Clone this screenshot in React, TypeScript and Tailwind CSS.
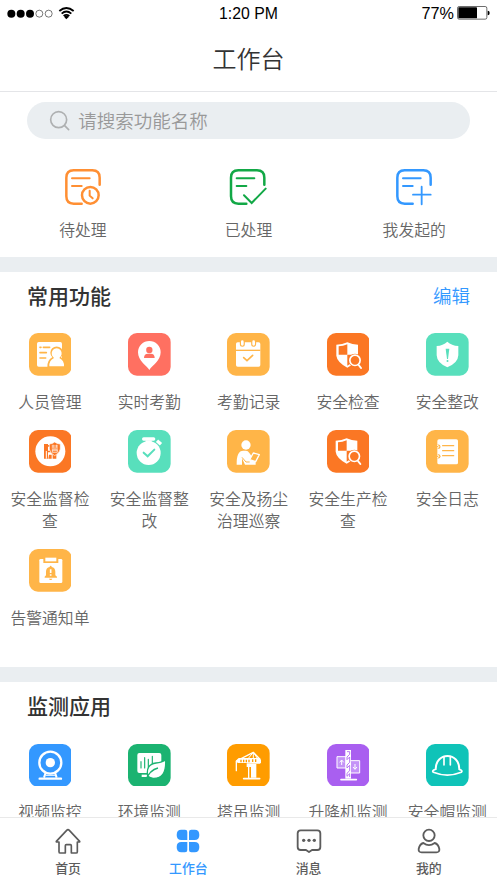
import React from "react";

type Item = { label: string; bg: string; icon: React.ReactNode };

const W = "#fff";
const AMBER = "#ffb548";
const ORANGE = "#fb7724";
const MINT = "#58dfbc";

function ShieldSearch() {
  return (
    <>
      <path d="M61 28 Q76 35 93 35 V68 Q92 87 61 104 Q30 87 28 68 V35 Q46 35 61 28Z" fill={W} />
      <path d="M61 34 V65 H35 V40 Q48 40 61 34Z" fill={ORANGE} />
      <path d="M61 65 H89 Q86 84 61 98Z" fill={ORANGE} />
      <circle cx="84" cy="82" r="20" fill={ORANGE} />
      <circle cx="84" cy="82" r="15.5" fill={ORANGE} stroke={W} strokeWidth="5" />
      <path d="M95 96 L102 105" stroke={W} strokeWidth="6" strokeLinecap="round" />
    </>
  );
}

const people = (
  <>
    <rect x="24" y="27" width="75" height="74" rx="5" fill={W} />
    <path d="M33 43 H36 M43 43 H62 M33 59 H52 M33 75 H50" stroke={AMBER} strokeWidth="5" strokeLinecap="round" />
    <path d="M55 105 Q53 82 70 73 A19 19 0 1 1 96 73 Q112 82 110 105Z" fill={AMBER} />
    <path d="M61 100 Q60 82 75 75 A15 16 0 1 1 91 75 Q106 82 105 100Z" fill={W} />
  </>
);

const pin = (
  <>
    <path d="M64 111 C56 98 30 84 30 58 A34 34 0 0 1 98 58 C98 84 72 98 64 111Z" fill={W} />
    <circle cx="64" cy="51" r="9.5" fill="#ff7061" />
    <path d="M48 75 Q48 62 60 62 H68 Q80 62 80 75Z" fill="#ff7061" />
  </>
);

const calendar = (
  <>
    <rect x="27" y="28" width="73" height="73" rx="5" fill={W} />
    <path d="M27 52 H100" stroke={AMBER} strokeWidth="4" />
    <path d="M46 27 V34 M80 27 V34" stroke={AMBER} strokeWidth="15" strokeLinecap="round" />
    <path d="M46 26 V34 M80 26 V34" stroke={W} strokeWidth="8" strokeLinecap="round" />
    <path d="M50 74 L60 83 L77 67" fill="none" stroke={AMBER} strokeWidth="5" strokeLinecap="round" />
  </>
);

const shieldAlert = (
  <>
    <path d="M64 26 Q77 38 97 39 V67 Q96 90 64 103 Q33 90 32 67 V39 Q51 38 64 26Z" fill={W} />
    <path d="M59 47 H70 L66 78 H63Z" fill={MINT} />
    <circle cx="64.5" cy="84" r="3" fill={MINT} />
  </>
);

const supervise = (
  <>
    <circle cx="64" cy="64" r="45" fill={W} />
    <path d="M45 42 H57 V86 H45Z M60 74 H68 V86 H58Z M71 73 H82 V86 H71Z" fill={ORANGE} />
    <path d="M52 63 V86" stroke={W} strokeWidth="3" />
    <path d="M57 45 H66 V50 H57Z M57 62 H66 V67 H57Z" fill={ORANGE} />
    <path d="M77 36 Q84 42 94 42 V57 Q92 70 77 77 Q63 70 61 57 V42 Q70 42 77 36Z" fill={ORANGE} stroke={W} strokeWidth="2" />
    <path d="M68 48 H87 M72 44 V53 M83 44 V53 M68 54 H87 M70 58 H85 V67 H70Z M70 62 H85" fill="none" stroke={W} strokeWidth="2" />
  </>
);

const stopwatch = (
  <>
    <circle cx="62" cy="69" r="36" fill={W} />
    <path d="M47 27 H77" stroke={W} strokeWidth="10" strokeLinecap="round" />
    <path d="M53 31 H71 V42 H53Z" fill={W} />
    <path d="M87 32 L99 43" stroke={W} strokeWidth="10" />
    <path d="M47 68 L59 79 L79 59" fill="none" stroke={MINT} strokeWidth="6" strokeLinecap="round" />
  </>
);

const patrol = (
  <>
    <circle cx="57" cy="45" r="14" fill={W} />
    <path d="M29 104 Q28 62 49 62 H57 Q63 62 67 69 L80 86 H86 V104 H54 L45 85 V104Z" fill={W} />
    <path d="M45 82 L57 96 H68" fill="none" stroke={AMBER} strokeWidth="3" />
    <path d="M79 69 L97 74 L86 95 L68 89Z" fill={AMBER} stroke={W} strokeWidth="4" strokeLinejoin="round" />
  </>
);

const notebook = (
  <>
    <rect x="34" y="28" width="62" height="75" rx="5" fill={W} />
    <path d="M50 47 H83 M50 62 H83 M50 77 H83" stroke={AMBER} strokeWidth="4" strokeLinecap="round" />
    {[50, 79].map((y) => (
      <g key={y}>
        <circle cx="37" cy={y} r="6.5" fill={AMBER} />
        <path d={`M33 ${y - 3} A3.5 3.5 0 1 1 33 ${y + 3}`} fill="none" stroke={W} strokeWidth="3" />
      </g>
    ))}
  </>
);

const clipboard = (
  <>
    <rect x="31" y="30" width="69" height="72" rx="4" fill={W} />
    <path d="M43 25 H88 V42 H43Z" fill={AMBER} />
    <path d="M49 26 H82 V37 H49Z" fill={W} />
    <path d="M47 86 V83 L51 79 V68 Q51 56 62 54 Q62 50 65 50 Q68 50 68 54 Q79 56 79 68 V79 L84 83 V86Z" fill={AMBER} />
    <path d="M60 89 H70 Q69 93 65 93 Q61 93 60 89Z" fill={AMBER} />
    <path d="M65 61 V72 M65 76 V80" stroke={W} strokeWidth="5" />
  </>
);

const webcam = (
  <>
    <circle cx="64" cy="56" r="33" fill="none" stroke={W} strokeWidth="7" />
    <circle cx="64" cy="56" r="14" fill={W} />
    <path d="M50 86 L45 101 M78 86 L83 101" stroke={W} strokeWidth="6" />
    <path d="M50 94 H78" stroke={W} strokeWidth="3" />
    <path d="M32 104 H96" stroke={W} strokeWidth="7" strokeLinecap="round" />
  </>
);

const GREEN = "#1bb371";
const environment = (
  <>
    <rect x="28" y="27" width="72" height="60" rx="6" fill={W} />
    <path d="M39 53 V72 M50 41 V72 M61 46 V70 M73 37 V60" stroke={GREEN} strokeWidth="3.5" strokeLinecap="round" />
    <path d="M41 92 H58 V99 H41Z" fill={W} />
    <path d="M59 96 Q53 61 84 57 Q103 55 113 48 Q116 105 75 103 Q63 101 59 96Z" fill={W} stroke={GREEN} strokeWidth="4" />
    <path d="M55 105 Q65 79 90 72" fill="none" stroke={GREEN} strokeWidth="4" />
  </>
);

const crane = (
  <>
    <path d="M28 51 L79 25 L99 46" fill="none" stroke={W} strokeWidth="4" strokeLinejoin="round" />
    <path d="M79 25 L65 42 M79 25 V43 M79 25 L91 43" stroke={W} strokeWidth="3" />
    <path d="M25 52 L35 42 H98 L102 47 V57 H33Z" fill={W} />
    <path d="M42 47 V55 M50 47 V55 M58 47 V55 M66 47 V55 M77 46 V54 M86 46 V54" stroke="#ff9c00" strokeWidth="4" />
    <path d="M28 54 V80" stroke={W} strokeWidth="4" strokeLinecap="round" />
    <path d="M59 58 H100 V60 H88 V101 H72 V69 H59Z" fill={W} />
    <path d="M65 67 V104" stroke={W} strokeWidth="4" />
    <path d="M50 104 H98" stroke={W} strokeWidth="5" strokeLinecap="round" />
  </>
);

const elevator = (
  <>
    <path d="M30 38 H57 V72 H30Z" fill="#c492f7" stroke={W} strokeWidth="3" />
    <path d="M70 50 H98 V87 H70Z" fill="#c492f7" stroke={W} strokeWidth="3" />
    <path d="M44 63 V49 M38 55 L44 48 L50 55 M84 60 V75 M78 69 L84 76 L90 69" fill="none" stroke={W} strokeWidth="3" />
    <path d="M55 18 H72 V104 H55Z" fill={W} />
    <path d="M60 23 H68 V31 L60 39 V47 L68 39 V55 L60 63 V72 L68 64 V80 L60 88 V97 L68 89 V99" fill="none" stroke="#a95ff0" strokeWidth="2.5" />
    <path d="M42 107 H88" stroke={W} strokeWidth="5" strokeLinecap="round" />
  </>
);

const helmet = (
  <>
    <path d="M29 78 C27 22 102 22 100 78" fill="none" stroke={W} strokeWidth="6" />
    <path d="M54 38 V63 M73 38 V63" stroke={W} strokeWidth="5" strokeLinecap="round" />
    <path d="M28 77 Q16 79 22 85 Q64 102 106 85 Q112 79 100 77" fill="none" stroke={W} strokeWidth="5" strokeLinejoin="round" />
  </>
);

const common: Item[] = [
  { label: "人员管理", bg: AMBER, icon: people },
  { label: "实时考勤", bg: "#ff7061", icon: pin },
  { label: "考勤记录", bg: AMBER, icon: calendar },
  { label: "安全检查", bg: ORANGE, icon: <ShieldSearch /> },
  { label: "安全整改", bg: MINT, icon: shieldAlert },
  { label: "安全监督检查", bg: ORANGE, icon: supervise },
  { label: "安全监督整改", bg: MINT, icon: stopwatch },
  { label: "安全及扬尘治理巡察", bg: AMBER, icon: patrol },
  { label: "安全生产检查", bg: ORANGE, icon: <g transform="translate(-2 -3)"><ShieldSearch /></g> },
  { label: "安全日志", bg: AMBER, icon: notebook },
  { label: "告警通知单", bg: AMBER, icon: clipboard },
];

const monitor: Item[] = [
  { label: "视频监控", bg: "#3398ff", icon: webcam },
  { label: "环境监测", bg: GREEN, icon: environment },
  { label: "塔吊监测", bg: "#ff9c00", icon: crane },
  { label: "升降机监测", bg: "#a95ff0", icon: elevator },
  { label: "安全帽监测", bg: "#0fc3b8", icon: helmet },
];

function Grid({ items }: { items: Item[] }) {
  return (
    <div className="ml-[0.3px] grid grid-cols-5 gap-y-[16.6px]">
      {items.map((it) => (
        <div key={it.label} className="flex flex-col items-center">
          <svg viewBox="0 0 128 128" className="size-[42.67px]">
            <rect width="128" height="128" rx="27" fill={it.bg} />
            {it.icon}
          </svg>
          <span className="mt-[15px] w-[80px] text-center text-[15.8px] leading-[22.4px] font-[350] break-all text-[#666]">
            {it.label}
          </span>
        </div>
      ))}
    </div>
  );
}

function Task({ color, label, children }: { color: string; label: string; children: React.ReactNode }) {
  return (
    <div className="flex flex-1 flex-col items-center">
      <svg viewBox="0 0 108 110" className="h-[36.67px] w-[36px] overflow-visible" fill="none" stroke={color} strokeWidth="7.5" strokeLinecap="round">
        {children}
      </svg>
      <span className="mt-[13px] text-[15.8px] leading-[22px] font-[350] text-[#666]">{label}</span>
    </div>
  );
}

function Sheet() {
  return (
    <>
      <path d="M104 47 V26 Q104 4 82 4 H26 Q4 4 4 26 V82 Q4 104 26 104 H50" />
      <path d="M21 28 H74 M21 51 H50" strokeWidth="6" />
    </>
  );
}

function Tab({ label, active, children }: { label: string; active?: boolean; children: React.ReactNode }) {
  return (
    <div className={`flex flex-1 flex-col items-center ${active ? "text-[#3398ff]" : "text-[#5c5c5c]"}`}>
      <svg viewBox="0 0 78 78" className="size-[26px] overflow-visible" fill="none" stroke="currentColor" strokeWidth="5.5" strokeLinecap="round" strokeLinejoin="round">
        {children}
      </svg>
      <span className="mt-[5px] text-[12.9px] leading-[18px] font-medium">{label}</span>
    </div>
  );
}

export default function App() {
  return (
    <div className="flex h-[883px] w-[497px] flex-col overflow-hidden bg-white font-['Noto_Sans_CJK_SC',sans-serif]">
      <div className="grid h-[27px] shrink-0 grid-cols-3 items-center px-[7px] font-['Liberation_Sans',sans-serif] text-[16px] leading-none text-black">
        <div className="flex items-center">
          <svg viewBox="0 0 204 40" className="h-[13.33px] w-[68px]">
            {[13, 41, 69].map((x) => (
              <circle key={x} cx={x} cy="20" r="12" />
            ))}
            {[97, 125].map((x) => (
              <circle key={x} cx={x} cy="20" r="10.5" fill="none" stroke="#333" strokeWidth="2" />
            ))}
            <g fill="none" stroke="#000" strokeWidth="5.5">
              <path d="M157 12 Q178 -6 200 12" />
              <path d="M164 20 Q178 7 193 20" />
              <path d="M170 27 Q178 20 187 27" />
            </g>
            <path d="M171 29 Q178 23 186 29 L178 37Z" />
          </svg>
        </div>
        <span className="text-center text-[15.8px]">1:20 PM</span>
        <div className="flex items-center justify-end gap-[3px]">
          <span className="text-[16.2px]">77%</span>
          <svg viewBox="0 0 99 42" className="h-[14px] w-[33px]">
            <rect x="1.5" y="1.5" width="88" height="38" rx="5" fill="none" stroke="#222" strokeWidth="2" />
            <rect x="4" y="4" width="56" height="33" rx="2" />
            <path d="M92 14 Q98 14 98 21 Q98 28 92 28Z" />
          </svg>
        </div>
      </div>
      <div className="flex h-[65px] shrink-0 items-center justify-center border-b border-[#e4e5e8] pb-[2px] text-[24px] font-[350] text-[#333]">
        工作台
      </div>
      <div className="mx-[27px] mt-[10px] flex h-[37px] shrink-0 items-center rounded-full bg-[#eaeef1] pl-[22px]">
        <svg viewBox="0 0 64 64" className="size-[21.3px]" fill="none" stroke="#aeb0b1" strokeWidth="5" strokeLinecap="round">
          <circle cx="29" cy="29" r="24" />
          <path d="M47 47 L59 59" />
        </svg>
        <span className="ml-[8px] text-[18.5px] leading-none font-[350] text-[#999]">请搜索功能名称</span>
      </div>
      <div className="mt-[30px] flex h-[87.5px] shrink-0">
        <Task color="#ff8f33" label="待处理">
          <Sheet />
          <circle cx="76" cy="79" r="25" />
          <path d="M74 65 V80 L83 88" strokeWidth="6" />
        </Task>
        <Task color="#12a846" label="已处理">
          <g transform="translate(-4 0)">
            <Sheet />
            <path d="M43 79 L66 102 L108 59" strokeWidth="6" />
          </g>
        </Task>
        <Task color="#3398ff" label="我发起的">
          <Sheet />
          <path d="M51 77 H104 M77 53 V106" strokeWidth="5.5" />
        </Task>
      </div>
      <div className="h-[15.7px] shrink-0 bg-[#eaeef1]" />
      <section className="h-[394.5px] shrink-0">
        <div className="flex h-[61.2px] items-start justify-between px-[27px] pt-[8px] leading-[30px]">
          <h2 className="text-[21px] font-medium text-[#333]">常用功能</h2>
          <button className="text-[18.5px] font-[350] text-[#3398ff]">编辑</button>
        </div>
        <Grid items={common} />
      </section>
      <div className="h-[15.7px] shrink-0 bg-[#eaeef1]" />
      <section className="min-h-0 flex-1 overflow-hidden">
        <div className="flex h-[61.2px] items-start px-[27px] pt-[8px] leading-[30px]">
          <h2 className="text-[21px] font-medium text-[#333]">监测应用</h2>
        </div>
        <Grid items={monitor} />
      </section>
      <nav className="flex h-[66px] shrink-0 border-t border-[#e9e9e9] bg-white px-[8px] pt-[9.5px]">
        <Tab label="首页">
          <path d="M4 40 L35 7 Q39 3 43 7 L74 40 Q75 42 72 42 H67 V71 Q67 75 63 75 H49 V53 Q49 50 46 50 H34 Q31 50 31 53 V75 H16 Q12 75 12 71 V42 H6 Q3 42 4 40Z" strokeWidth="5" />
        </Tab>
        <Tab label="工作台" active>
          <g fill="currentColor" stroke="none">
            <path d="M19 5 H30 Q37 5 37 12 V36 H19 Q5 36 5 21 Q5 5 19 5Z" />
            <path d="M49 5 H59 Q73 5 73 21 Q73 36 59 36 H42 V12 Q42 5 49 5Z" />
            <path d="M19 42 H37 V66 Q37 73 30 73 H19 Q5 73 5 57 Q5 42 19 42Z" />
            <path d="M42 42 H59 Q73 42 73 57 Q73 73 59 73 H49 Q42 73 42 66Z" />
          </g>
        </Tab>
        <Tab label="消息">
          <path d="M14 7 H64 Q73 7 73 16 V57 Q73 66 64 66 H48 L39 72 L30 66 H14 Q5 66 5 57 V16 Q5 7 14 7Z" />
          <g fill="currentColor" stroke="none">
            <circle cx="23" cy="37" r="5" />
            <circle cx="39" cy="37" r="5" />
            <circle cx="55" cy="37" r="5" />
          </g>
        </Tab>
        <Tab label="我的">
          <circle cx="39" cy="22" r="17" />
          <path d="M22 45 Q39 58 56 45 Q67 48 70 63 Q71 73 61 73 H17 Q7 73 8 63 Q11 48 22 45Z" />
        </Tab>
      </nav>
    </div>
  );
}
